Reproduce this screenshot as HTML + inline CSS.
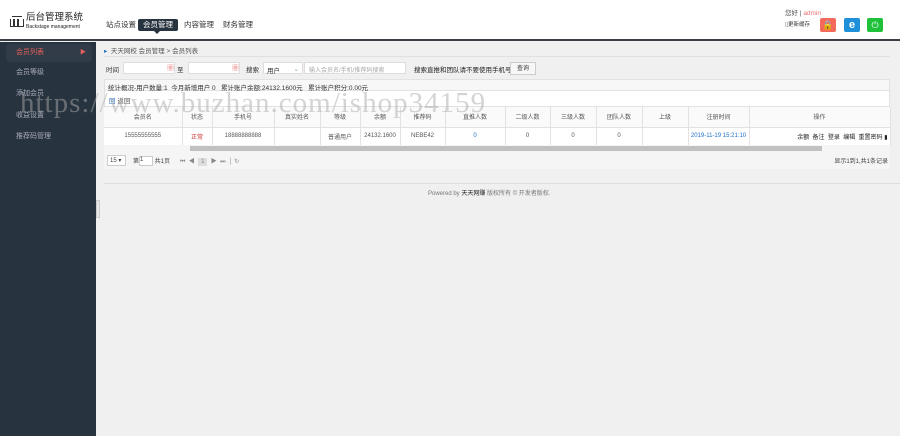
<!DOCTYPE html>
<html><head><meta charset="utf-8"><style>
*{margin:0;padding:0;box-sizing:border-box}
body{width:900px;height:436px;overflow:hidden;background:#f0f0f0;font-family:"Liberation Sans","Noto Sans CJK SC",sans-serif;font-size:7px;color:#333;position:relative}
.abs{position:absolute}
#hdr{left:0;top:0;width:900px;height:41px;background:#fff;border-bottom:2px solid #3a3f45}
#side{left:0;top:42px;width:96px;height:394px;background:#27333f}
.si{position:absolute;left:6px;width:86px;height:18px;line-height:18px;padding-left:10px;color:#aab;font-size:7px}
.nav{position:absolute;top:19px;height:12px;line-height:12px;font-size:7.5px;color:#333;padding:0 5px}
table{border-collapse:collapse;position:absolute;left:104px;top:107px;width:786px;background:#fff;table-layout:fixed}
td{border-right:1px solid #e2e2e2;text-align:center;font-size:6px;color:#555;white-space:nowrap;overflow:hidden}
tr.h td{height:20px;background:#fafafa;border-bottom:1px solid #e2e2e2}
tr.d td{height:18px}
.wm{left:20px;top:86px;font-family:"Liberation Serif",serif;font-size:29px;color:rgba(170,170,170,0.5);letter-spacing:1px;white-space:nowrap;line-height:34px}
</style></head><body>
<div id="hdr" class="abs">
 <div class="abs" style="left:10px;top:19px;width:14px;height:8px;border:1.5px solid #333;border-top:none"></div>
 <div class="abs" style="left:13px;top:19px;width:1.5px;height:8px;background:#333"></div>
 <div class="abs" style="left:17px;top:19px;width:1.5px;height:8px;background:#333"></div>
 <div class="abs" style="left:12px;top:16px;width:10px;height:3px;border-top:1.5px solid #333"></div>
 <div class="abs" style="left:26px;top:12px;font-size:9.5px;line-height:11px;color:#222">后台管理系统</div>
 <div class="abs" style="left:26px;top:24px;font-size:5px;line-height:6px;color:#222">Backstage management</div>
 <div class="nav" style="left:101px">站点设置</div>
 <div class="nav" style="left:138px;background:#27333f;color:#fff;border-radius:2px">会员管理</div>
 <div class="abs" style="left:154px;top:31px;border:3px solid transparent;border-top-color:#27333f"></div>
 <div class="nav" style="left:179px">内容管理</div>
 <div class="nav" style="left:218px">财务管理</div>
 <div class="abs" style="left:785px;top:7px;font-size:6.5px;color:#555">您好 | <span style="color:#e87070">admin</span></div>
 <div class="abs" style="left:785px;top:20px;font-size:5.5px;color:#333">▯更新缓存</div>
 <div class="abs" style="left:820px;top:18px;width:16px;height:14px;background:#f36a5a;border-radius:2px;color:#fff;text-align:center;font-size:9px;line-height:14px">🔒</div>
 <div class="abs" style="left:844px;top:18px;width:16px;height:14px;background:#1e8fd8;border-radius:2px;color:#fff;text-align:center;font-size:11px;font-weight:bold;line-height:14px">e</div>
 <div class="abs" style="left:867px;top:18px;width:16px;height:14px;background:#1fc13a;border-radius:2px;color:#fff;text-align:center;font-size:9px;line-height:14px">⏻</div>
</div>
<div id="side" class="abs">
 <div class="si" style="top:2px;background:#313c48;color:#e5605a;border-radius:3px">会员列表<span style="position:absolute;right:6px;font-size:6px">▶</span></div>
 <div class="si" style="top:22px">会员等级</div>
 <div class="si" style="top:43px">添加会员</div>
 <div class="si" style="top:65px">收益设置</div>
 <div class="si" style="top:86px">推荐码管理</div>
</div>
<div class="abs" style="left:96px;top:200px;width:4px;height:18px;background:#e8e8e8;border:1px solid #ccc"></div>
<div class="abs" style="left:104px;top:45px;font-size:6.5px;color:#555"><span style="color:#1e6fc8">▸</span>&nbsp; 天天网校 会员管理 &gt; 会员列表</div>
<div class="abs" style="left:104px;top:56px;width:786px;border-top:1px solid #e0e0e0"></div>
<div class="abs" style="left:106px;top:64px;font-size:6.5px">时间</div>
<div class="abs" style="left:123px;top:62px;width:52px;height:12px;background:#fff;border:1px solid #ddd;text-align:right;color:#e87070;font-size:7px">▦</div>
<div class="abs" style="left:177px;top:64px;font-size:6.5px">至</div>
<div class="abs" style="left:188px;top:62px;width:52px;height:12px;background:#fff;border:1px solid #ddd;text-align:right;color:#e87070;font-size:7px">▦</div>
<div class="abs" style="left:246px;top:64px;font-size:6.5px">搜索</div>
<div class="abs" style="left:263px;top:62px;width:40px;height:12px;background:#fff;border:1px solid #ddd;font-size:6.5px;padding:2px 3px">用户<span style="float:right;color:#7aa">⌄</span></div>
<div class="abs" style="left:304px;top:62px;width:102px;height:12px;background:#fff;border:1px solid #ddd;font-size:6px;color:#aaa;padding:2px 4px">输入会员名/手机/推荐码搜索</div>
<div class="abs" style="left:414px;top:64px;font-size:6.5px;color:#222">搜索直推和团队请不要使用手机号</div>
<div class="abs" style="left:510px;top:62px;width:26px;height:13px;background:#f7f7f7;border:1px solid #ccc;font-size:6px;text-align:center;line-height:12px">查询</div>
<div class="abs" style="left:104px;top:79px;width:786px;height:12px;background:#f7f7f7;border:1px solid #e2e2e2;font-size:6.5px;padding:2px 3px">统计概况-用户数量:1 &nbsp;今月新增用户 0 &nbsp; 累计账户余额:24132.1600元 &nbsp; 累计账户积分:0.00元</div>
<div class="abs" style="left:104px;top:91px;width:786px;height:16px;background:#fff;border:1px solid #e2e2e2;border-top:none;font-size:6.5px;padding:4px 4px;color:#1e6fc8">回 <span style="color:#555">返回</span></div>
<table>
<colgroup><col style="width:78px"><col style="width:30px"><col style="width:62px"><col style="width:46px"><col style="width:40px"><col style="width:40px"><col style="width:45px"><col style="width:60px"><col style="width:45px"><col style="width:46px"><col style="width:46px"><col style="width:46px"><col style="width:61px"><col style="width:141px"></colgroup>
<tr class="h"><td>会员名</td><td>状态</td><td>手机号</td><td>真实姓名</td><td>等级</td><td>余额</td><td>推荐码</td><td>直推人数</td><td>二级人数</td><td>三级人数</td><td>团队人数</td><td>上级</td><td>注册时间</td><td>操作</td></tr>
<tr class="d"><td>15555555555</td><td style="color:#c33">正常</td><td>18888888888</td><td></td><td>普通用户</td><td>24132.1600</td><td>NEBE42</td><td style="color:#1e6fc8">0</td><td>0</td><td>0</td><td>0</td><td></td><td style="color:#1e6fc8">2019-11-19 15:21:10</td><td style="text-align:right;color:#222;padding-right:2px">余额 &nbsp;备注 &nbsp;登录 &nbsp;编辑 &nbsp;重置密码 ▮</td></tr>
</table>
<div class="abs" style="left:104px;top:145px;width:786px;height:7px;background:#f5f5f5"></div>
<div class="abs" style="left:190px;top:146px;width:632px;height:5px;background:#c1c1c1"></div>
<div class="abs" style="left:104px;top:152px;width:786px;height:17px;background:#f5f5f5;font-size:6px;color:#444">
 <span class="abs" style="left:3px;top:3px;width:19px;height:11px;background:#fff;border:1px solid #ccc;padding:1px 2px">15 ▾</span>
 <span class="abs" style="left:29px;top:4px">第<span style="display:inline-block;width:14px;height:10px;background:#fff;border:1px solid #ccc;vertical-align:middle">1</span> 共1页</span>
 <span class="abs" style="left:76px;top:4px;color:#888">⏮ &nbsp;◀ &nbsp;<span style="background:#ddd;padding:1px 3px">1</span>&nbsp; ▶ &nbsp;⏭ &nbsp;│ ↻</span>
 <span class="abs" style="right:2px;top:4px">显示1到1,共1条记录</span>
</div>
<div class="abs" style="left:104px;top:183px;width:796px;border-top:1px solid #ddd"></div>
<div class="abs" style="left:428px;top:188px;font-size:6px;color:#777">Powered by <span style="color:#222">天天网赚</span> 版权所有 © 开发者版权.</div>
<div class="abs wm">https://www.buzhan.com/ishop34159</div>
</body></html>
